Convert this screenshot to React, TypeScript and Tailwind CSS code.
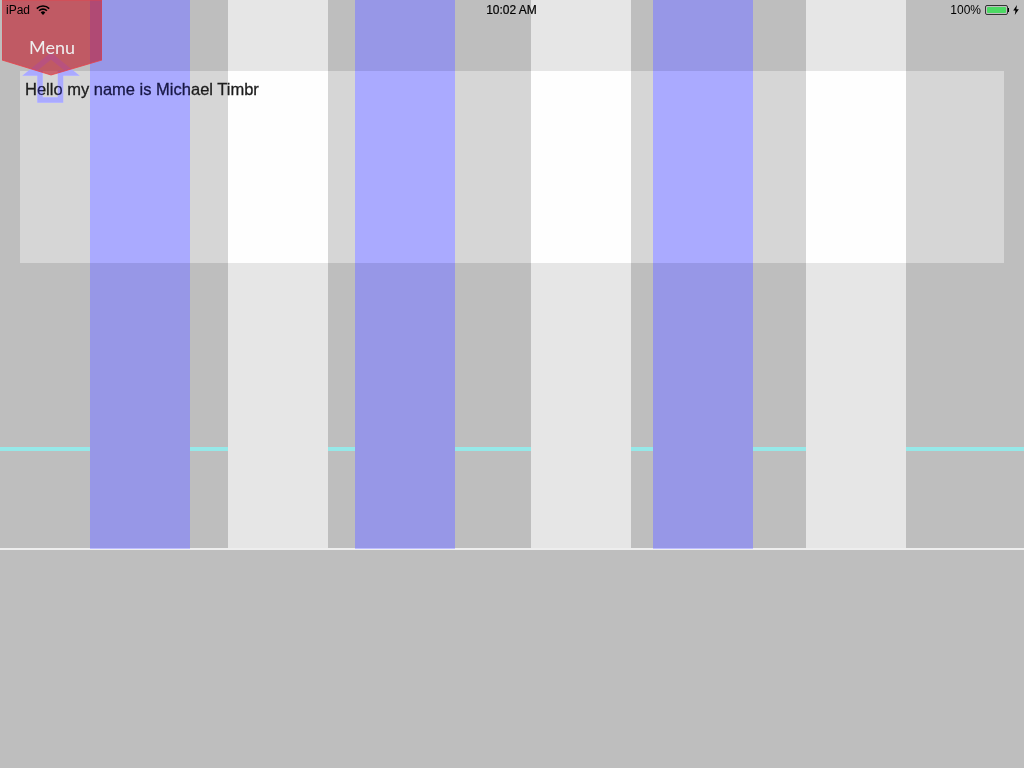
const font = { fontFamily: '"Liberation Sans", Arial, sans-serif' };

function Gap({ className }: { className: string }) {
  return (
    <div className={`${className} shrink-0`}>
      <div className="mt-[447px] h-1 bg-[#96e8e8]" />
    </div>
  );
}

function BlueColumn() {
  return (
    <div className="relative h-[549px] w-[100px] shrink-0">
      <div className="absolute inset-0 bg-[#cbcbff] mix-blend-multiply" />
      <div className="absolute inset-0 bg-[#000029] mix-blend-plus-lighter" />
    </div>
  );
}

function LightColumn() {
  return <div className="h-[548px] w-[100px] shrink-0 bg-[#e6e6e6]" />;
}

function StatusBar() {
  return (
    <div className="absolute inset-x-0 top-0 z-30 flex h-5 items-center justify-between pl-[6px] pr-[5px] text-[12px] text-black">
      <div className="flex w-[200px] items-center gap-[6px]">
        <span>iPad</span>
        <svg width="14" height="10" viewBox="0 0 14 10">
          <path d="M0.8 3.6 A8.7 8.7 0 0 1 13.2 3.6" fill="none" stroke="#000" strokeWidth="1.6" />
          <path d="M3.1 5.7 A5.5 5.5 0 0 1 10.9 5.7" fill="none" stroke="#000" strokeWidth="1.6" />
          <path d="M7 10 L4.7 7.5 A3.2 3.2 0 0 1 9.3 7.5 Z" fill="#000" />
        </svg>
      </div>
      <span className="mr-[2px] [-webkit-text-stroke:0.2px_#000]">10:02 AM</span>
      <div className="flex w-[200px] items-center justify-end">
        <span className="mr-[4px]">100%</span>
        <div className="flex h-[10px] w-[23px] items-center rounded-[2px] border border-[#333333] p-px">
          <div className="h-full w-full rounded-[1px] bg-[#4cd964]" />
        </div>
        <div className="mr-[4px] h-1 w-px bg-black" />
        <svg width="6" height="10" viewBox="0 0 6 10">
          <path d="M4 0 L0.2 5.6 H2.5 L1.8 10 L5.8 4.2 H3.3 Z" fill="#000" />
        </svg>
      </div>
    </div>
  );
}

function ArrowLayer({ className }: { className: string }) {
  return (
    <svg className={`absolute left-[2px] top-[-23px] ${className}`} width="58" height="58" viewBox="0 0 58 58">
      <path d="M29 8 L8 25 H18 V52 H38.5 V25 H50 Z" fill="none" stroke="currentColor" strokeWidth="5.5" />
    </svg>
  );
}

function Menu() {
  return (
    <div className="absolute left-[2px] top-0 z-20 h-[76px] w-[100px]">
      <svg className="absolute inset-0" width="100" height="76" viewBox="0 0 100 76">
        <polygon points="0,0 100,0 100,60 49,75 0,60" fill="#c11728" fillOpacity="0.6" stroke="#e8424a" strokeOpacity="0.8" strokeWidth="1" />
      </svg>
      <span className="relative block pt-[36px] text-center text-[18px] leading-[22px] text-[#eeeeee]" style={{ fontFamily: '"Lato", sans-serif' }}>
        Menu
      </span>
    </div>
  );
}

export default function App() {
  return (
    <div className="relative h-[768px] w-[1024px] overflow-hidden bg-[#bebebe]" style={font}>
      <div className="absolute left-5 right-5 top-[71px] h-[192px]">
        <div className="absolute inset-0 bg-[#181818] mix-blend-plus-lighter" />
        <p className="relative pl-[5px] pt-2 text-[16.5px] font-normal leading-[20px] text-[#1c1c1c] [-webkit-text-stroke:0.3px_#1c1c1c]">
          Hello my name is Michael Timbr
        </p>
        <ArrowLayer className="text-[#aaaaff] mix-blend-darken" />
        <ArrowLayer className="text-[#000040] mix-blend-plus-lighter" />
      </div>

      <div className="box-content flex h-[548px] border-b-2 border-[#eeeeee]">
        <Gap className="w-[90px]" />
        <BlueColumn />
        <Gap className="w-[38px]" />
        <LightColumn />
        <Gap className="w-[27px]" />
        <BlueColumn />
        <Gap className="w-[76px]" />
        <LightColumn />
        <Gap className="w-[22px]" />
        <BlueColumn />
        <Gap className="w-[53px]" />
        <LightColumn />
        <Gap className="w-[118px]" />
      </div>

      <Menu />
      <StatusBar />
    </div>
  );
}
